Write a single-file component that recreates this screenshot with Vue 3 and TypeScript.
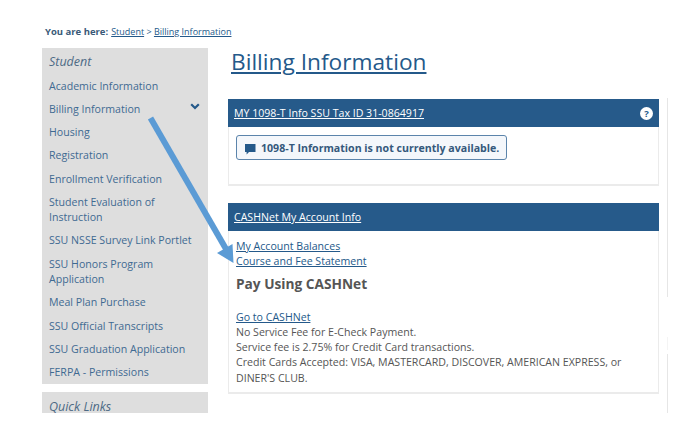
<script setup lang="ts">
const navItems: { label: string; open?: boolean }[] = [
  { label: 'Academic Information' },
  { label: 'Billing Information', open: true },
  { label: 'Housing' },
  { label: 'Registration' },
  { label: 'Enrollment Verification' },
  { label: 'Student Evaluation of Instruction' },
  { label: 'SSU NSSE Survey Link Portlet' },
  { label: 'SSU Honors Program Application' },
  { label: 'Meal Plan Purchase' },
  { label: 'SSU Official Transcripts' },
  { label: 'SSU Graduation Application' },
  { label: 'FERPA - Permissions' },
]
</script>

<template>
  <div class="page">
    <div class="crumbs">
      <strong>You are here:</strong>
      <a class="first">Student</a> &gt; <a>Billing Information</a>
    </div>
    <div class="columns">
      <aside class="side">
        <nav class="box">
          <div class="box-title">Student</div>
          <a v-for="item in navItems" :key="item.label" class="nav-item">
            <span>{{ item.label }}</span>
            <svg v-if="item.open" class="chev" viewBox="0 0 10 7" width="10" height="7">
              <path d="M1.2 1.2 5 5l3.8-3.8" fill="none" stroke="#24598a" stroke-width="2.2" />
            </svg>
          </a>
        </nav>
        <div class="box quick">
          <div class="box-title">Quick Links</div>
        </div>
      </aside>
      <main class="main">
        <h1><a>Billing Information</a></h1>
        <section class="panel first-panel">
          <header class="panel-head">
            <a>MY 1098-T Info SSU Tax ID 31-0864917</a>
            <span class="help">?</span>
          </header>
          <div class="panel-body">
            <div class="notice">
              <svg viewBox="0 0 12 12" width="12" height="12">
                <path d="M1 1h10.500v8H5L2.600 11.400V9H1z" fill="#24598a" />
              </svg>
              <span>1098-T Information is not currently available.</span>
            </div>
          </div>
        </section>
        <section class="panel">
          <header class="panel-head">
            <a>CASHNet My Account Info</a>
          </header>
          <div class="panel-body text">
            <a>My Account Balances</a><br />
            <a>Course and Fee Statement</a>
            <h2>Pay Using CASHNet</h2>
            <a>Go to CASHNet</a><br />
            No Service Fee for E-Check Payment.<br />
            Service fee is 2.75% for Credit Card transactions.<br />
            Credit Cards Accepted: VISA, MASTERCARD, DISCOVER, AMERICAN EXPRESS, or DINER'S CLUB.
          </div>
        </section>
      </main>
      <div class="rule">
        <i class="seg-a"></i>
        <i class="seg-b"></i>
        <i class="seg-c"></i>
      </div>
    </div>
    <svg class="arrow" viewBox="0 0 676 438" width="676" height="438">
      <path d="M150.500 118 226 249" stroke="#5b9bd5" stroke-width="6" fill="none" />
      <path d="M233.500 263 217 253 232.500 244z" fill="#5b9bd5" />
    </svg>
  </div>
</template>

<style>
body { background: #fff; }
</style>

<style scoped>
.page {
  position: relative;
  width: 676px;
  height: 413px;
  overflow: hidden;
  padding: 25px 0 0 45px;
  box-sizing: border-box;
  background: #fff;
  font-family: "Open Sans", sans-serif;
  font-size: 10.6px;
  color: #555;
}
a { color: #24598a; text-decoration: underline; }
.crumbs { font-size: 9px; line-height: 14px; color: #24598a; white-space: nowrap; }
.crumbs strong { font-size: 9.5px; color: #3a5a78; margin-right: 2px; }
.crumbs .first { margin-left: 1px; }
.columns { display: flex; margin: 9px 0 0 -3px; align-items: flex-start; }
.side { width: 166px; flex: none; display: flex; flex-direction: column; gap: 8px; margin-right: 20px; }
.box { background: #dedede; padding: 6px 7px 0; }
.box-title { font-style: italic; font-size: 12.5px; line-height: 16px; color: #4d6a85; margin-bottom: 4.6px; }
.nav-item {
  display: flex;
  justify-content: space-between;
  align-items: flex-start;
  color: #3f6a92;
  text-decoration: none;
  line-height: 15.27px;
  padding: 4px 0;
  font-size: 10.6px;
}
.nav-item span { max-width: 150px; }
.chev { margin: 1px 1px 0 0; }
.quick { height: 21px; box-sizing: border-box; padding-top: 7px; }
.main { width: 431px; flex: none; margin-right: 8px; }
h1 { margin: 0; font-size: 22.7px; font-weight: 400; line-height: 28px; height: 51px; padding-left: 3px; }
.panel { border: 1px solid #ebebeb; border-top: 0; border-bottom-width: 2px; margin-bottom: 17px; }
.panel-head {
  background: #265a8a;
  height: 28px;
  margin: 0 -1px;
  padding: 0 6px;
  display: flex;
  align-items: center;
  justify-content: space-between;
}
.panel-head a { color: #fff; font-size: 10.6px; }
.help {
  width: 13px; height: 13px; border-radius: 50%;
  background: #fff; color: #265a8a;
  font-size: 9.5px; font-weight: 700; line-height: 13px; text-align: center;
}
.first-panel .panel-body { height: 57px; box-sizing: border-box; padding: 8px 7px; }
.notice {
  display: inline-flex; align-items: center; gap: 5px;
  height: 25px; box-sizing: border-box;
  padding: 0 7px;
  background: #f4f7fb;
  border: 1px solid #5b84ab;
  border-radius: 3px;
  color: #35597c;
  font-weight: 700;
  font-size: 10.6px;
}
.notice svg { margin-top: 2px; }
.text { padding: 8px 7px 6px; line-height: 15.27px; font-size: 10.6px; }
.text h2 { margin: 5px 0 17px; font-size: 13.7px; line-height: 18px; font-weight: 700; color: #555; }
.rule { width: 1px; flex: none; padding-top: 50px; display: flex; flex-direction: column; }
.rule i { display: block; background: #e6e6e6; }
.seg-a { height: 199px; }
.seg-b { height: 13px; margin-top: 40px; background: #f4f4f4 !important; }
.seg-c { height: 59px; margin-top: 4px; }
.arrow { position: absolute; left: 0; top: 0; pointer-events: none; }
</style>
